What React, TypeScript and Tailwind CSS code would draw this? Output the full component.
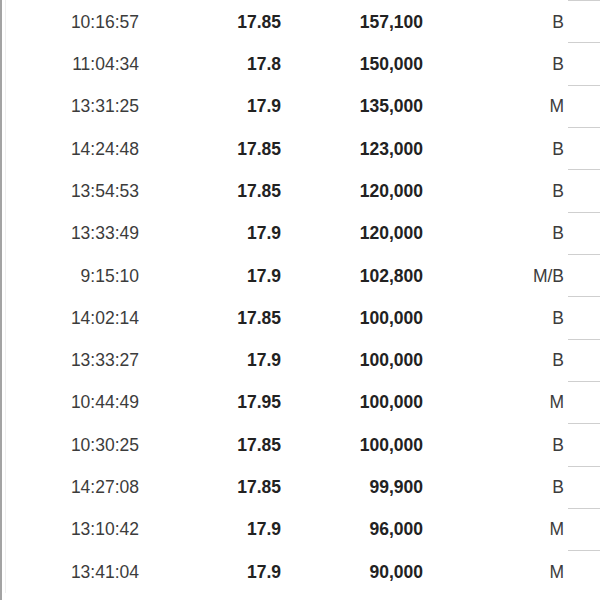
const rows = [
  { time: "10:16:57", price: "17.85", volume: "157,100", side: "B" },
  { time: "11:04:34", price: "17.8", volume: "150,000", side: "B" },
  { time: "13:31:25", price: "17.9", volume: "135,000", side: "M" },
  { time: "14:24:48", price: "17.85", volume: "123,000", side: "B" },
  { time: "13:54:53", price: "17.85", volume: "120,000", side: "B" },
  { time: "13:33:49", price: "17.9", volume: "120,000", side: "B" },
  { time: "9:15:10", price: "17.9", volume: "102,800", side: "M/B" },
  { time: "14:02:14", price: "17.85", volume: "100,000", side: "B" },
  { time: "13:33:27", price: "17.9", volume: "100,000", side: "B" },
  { time: "10:44:49", price: "17.95", volume: "100,000", side: "M" },
  { time: "10:30:25", price: "17.85", volume: "100,000", side: "B" },
  { time: "14:27:08", price: "17.85", volume: "99,900", side: "B" },
  { time: "13:10:42", price: "17.9", volume: "96,000", side: "M" },
  { time: "13:41:04", price: "17.9", volume: "90,000", side: "M" },
];

export default function App() {
  return (
    <div
      className="w-[600px] h-[600px] overflow-hidden bg-white border-l-2 border-[#a3a3a3] text-[17.5px] text-[#3c3c3c]"
      style={{ fontFamily: '"Liberation Sans", Arial, sans-serif' }}
    >
      <div className="ml-[3px] border-l border-[#efefef]">
        {rows.map((r, i) => (
          <div key={i} className="flex h-[42.33px] items-center pt-[1px]">
            <div className="w-[133px] text-right">{r.time}</div>
            <div className="w-[142px] text-right font-bold text-[#222]">{r.price}</div>
            <div className="w-[142px] text-right font-bold text-[#222]">{r.volume}</div>
            <div className="w-[141px] text-right">{r.side}</div>
            <div className="flex-1 self-stretch ml-[4px] -mt-[1px] border-t border-[#cfcfcf]" />
          </div>
        ))}
      </div>
    </div>
  );
}
